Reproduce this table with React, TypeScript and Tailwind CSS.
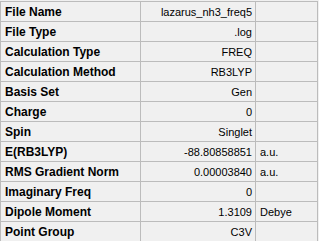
const rows: { label: string; value: string; unit?: string }[] = [
  { label: "File Name", value: "lazarus_nh3_freq5" },
  { label: "File Type", value: ".log" },
  { label: "Calculation Type", value: "FREQ" },
  { label: "Calculation Method", value: "RB3LYP" },
  { label: "Basis Set", value: "Gen" },
  { label: "Charge", value: "0" },
  { label: "Spin", value: "Singlet" },
  { label: "E(RB3LYP)", value: "-88.80858851", unit: "a.u." },
  { label: "RMS Gradient Norm", value: "0.00003840", unit: "a.u." },
  { label: "Imaginary Freq", value: "0" },
  { label: "Dipole Moment", value: "1.3109", unit: "Debye" },
  { label: "Point Group", value: "C3V" },
];

export default function App() {
  return (
    <div
      className="w-[319px] h-[241px] overflow-hidden bg-[#f0f0f0] pt-px text-black"
      style={{ fontFamily: '"Liberation Sans", Arial, sans-serif' }}
    >
      <div className="w-[318px] border-t border-l border-[#bcbcbc]">
        {rows.map((row) => (
          <div key={row.label} className="flex h-[20px] border-b border-[#bcbcbc]">
            <div className="w-[140px] shrink-0 border-r border-[#bcbcbc] pl-[4px] pt-[2px] text-[12px] font-bold leading-[17px] whitespace-nowrap">
              {row.label}
            </div>
            <div className="w-[115px] shrink-0 border-r border-[#bcbcbc] pr-[3px] pt-[2px] text-right text-[11px] leading-[17px] whitespace-nowrap">
              {row.value}
            </div>
            <div className="flex-1 border-r border-[#bcbcbc] pl-[4px] pt-[2px] text-[11px] leading-[17px] whitespace-nowrap">
              {row.unit}
            </div>
          </div>
        ))}
      </div>
    </div>
  );
}
